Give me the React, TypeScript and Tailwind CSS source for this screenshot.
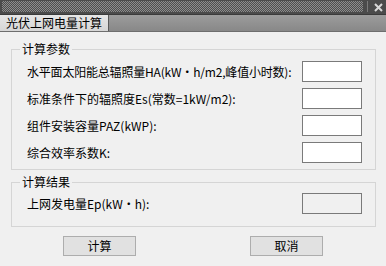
const font = { fontFamily: '"Noto Sans CJK SC", "Noto Sans", sans-serif' };

const Dot = () => <span className="inline-block w-[12px] text-center">·</span>;

const Field = ({ label, disabled }: { label: React.ReactNode; disabled?: boolean }) => (
  <div className="flex items-center justify-between h-[21px]">
    <span className="leading-[14px] whitespace-nowrap">{label}</span>
    <div
      className={`shrink-0 w-[60px] h-[21px] border border-[#7a7a7a] ${disabled ? "bg-[#f0f0f0]" : "bg-white"}`}
    />
  </div>
);

const App = () => {
  return (
    <div
      className="w-[386px] h-[266px] flex flex-col bg-[#f0f0f0] text-[12px] text-black overflow-hidden"
      style={font}
    >
      {/* title bar */}
      <div className="h-[14px] bg-[#4b4b4b] flex items-start pt-px pl-[2px] pr-[3px]">
        <div className="flex-1 h-[11px] bg-[conic-gradient(#8c8c8c_25%,#4e4e4e_0_50%,#8c8c8c_0_75%,#4e4e4e_0)] bg-[length:2px_2px]" />
        <div className="ml-[4px] w-[2px] h-[11px] border-l border-[#7a7a7a] border-r-[#2e2e2e]" />
        <svg className="ml-[5px] mt-[2px]" width="9" height="9" viewBox="0 0 9 9">
          <path d="M1 1 L8 8 M8 1 L1 8" stroke="#d8d8d8" strokeWidth="2" />
        </svg>
      </div>

      {/* tab bar */}
      <div className="h-[18px] flex bg-gradient-to-b from-[#9c9c9c] to-[#888888] border-t border-[#3a3a3a] border-b border-b-[#6e6e6e]">
        <div className="w-[109px] bg-gradient-to-b from-[#e6e6e6] to-[#d6d6d6] border-r border-[#5a5a5a] flex items-center pl-[6px] leading-[14px]">
          光伏上网电量计算
        </div>
      </div>

      <div className="pl-[11px] pr-[10px]">
        {/* 计算参数 */}
        <fieldset className="mt-[10px] border border-[#d5d5d5] pr-[13px] pl-[15px] pt-[5px] pb-[6px]">
          <legend className="ml-[-7px] px-[2px] leading-[14px]">计算参数</legend>
          <div className="flex flex-col gap-[6px]">
            <Field
              label={
                <span className="tracking-[-0.2px]">
                  水平面太阳能总辐照量HA(kW
                  <Dot />
                  h/m2,峰值小时数):
                </span>
              }
            />
            <Field label="标准条件下的辐照度Es(常数=1kW/m2):" />
            <Field label="组件安装容量PAZ(kWP):" />
            <Field label="综合效率系数K:" />
          </div>
        </fieldset>

        {/* 计算结果 */}
        <fieldset className="mt-[5px] border border-[#d5d5d5] pr-[13px] pl-[15px] pt-[4px] pb-[12px]">
          <legend className="ml-[-7px] px-[2px] leading-[14px]">计算结果</legend>
          <Field
            disabled
            label={
              <>
                上网发电量Ep(kW
                <Dot />
                h):
              </>
            }
          />
        </fieldset>

        <div className="mt-[9px] pl-[52px] flex gap-[114px]">
          <button className="w-[73px] h-[20px] bg-[#e1e1e1] border border-[#adadad] leading-[14px]">计算</button>
          <button className="w-[73px] h-[20px] bg-[#e1e1e1] border border-[#adadad] leading-[14px]">取消</button>
        </div>
      </div>
    </div>
  );
};

export default App;
